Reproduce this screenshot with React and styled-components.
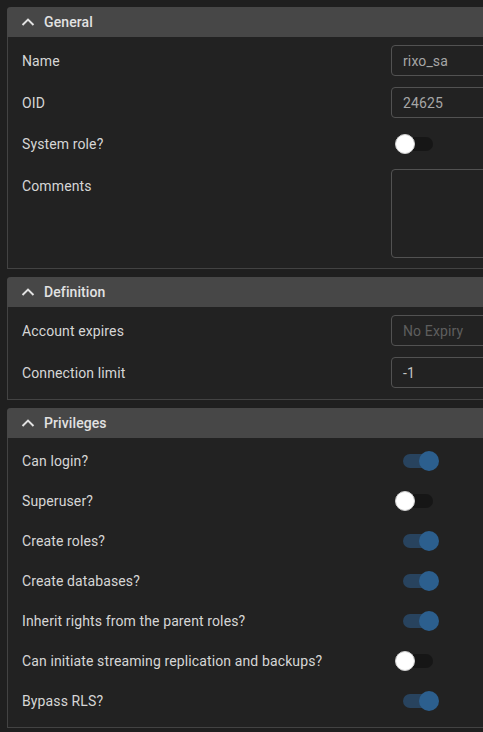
import React from "react";
import styled, { createGlobalStyle } from "styled-components";

const GlobalStyle = createGlobalStyle`
  html, body {
    margin: 0;
    padding: 0;
    overflow: hidden;
    background: #1f1f1f;
  }
  body {
    font-family: Roboto, "Liberation Sans", sans-serif;
  }
`;

const Page = styled.div`
  display: flex;
  flex-direction: column;
  gap: 8px;
  padding: 7px;
  width: 600px;
`;

const Section = styled.section`
  border: 1px solid #434343;
  border-top: none;
  border-radius: 4px 4px 0 0;
  background: #222222;
`;

const Header = styled.div`
  display: flex;
  align-items: center;
  gap: 8px;
  height: 30px;
  padding-left: 13px;
  background: #474747;
  border-radius: 4px 4px 0 0;
  margin: 0 -1px;
  color: #e2e2e2;
  font-size: 14px;
  font-weight: 500;
  letter-spacing: 0.1px;
`;

const Body = styled.div`
  display: flex;
  flex-direction: column;
  gap: 11px;
  padding: 8px 14px ${(p) => p.$bottom || 10}px;
`;

const Row = styled.div`
  display: grid;
  grid-template-columns: 369px 1fr;
  align-items: ${(p) => (p.$top ? "start" : "center")};
  min-height: ${(p) => (p.$tall ? "29px" : "0")};
`;

const Label = styled.span`
  color: #d6d6d6;
  font-size: 14px;
  line-height: 16px;
  letter-spacing: 0.12px;
  padding-top: ${(p) => (p.$top ? "9px" : "0")};
`;

const Input = styled.div`
  box-sizing: border-box;
  height: 31px;
  display: flex;
  align-items: center;
  padding-left: 11px;
  border: 1px solid #525252;
  border-radius: 4px;
  font-size: 14px;
  letter-spacing: 0.12px;
  color: ${(p) => p.$color || "#a6a6a6"};
`;

const TextArea = styled.div`
  box-sizing: border-box;
  height: 89px;
  border: 1px solid #525252;
  border-radius: 4px;
`;

const SwitchBox = styled.div`
  position: relative;
  width: 46px;
  height: 20px;
  margin-left: 4px;
`;

const Track = styled.div`
  position: absolute;
  top: 3px;
  left: ${(p) => (p.$on ? "8px" : "4px")};
  width: 34px;
  height: 14px;
  border-radius: 7px;
  background: ${(p) => (p.$on ? "#28435e" : "#161616")};
`;

const Knob = styled.div`
  position: absolute;
  top: 0;
  left: ${(p) => (p.$on ? "24px" : "0")};
  box-sizing: border-box;
  width: 20px;
  height: 20px;
  border-radius: 50%;
  background: ${(p) => (p.$on ? "#2c5f8e" : "#ffffff")};
  border: ${(p) => (p.$on ? "none" : "1px solid #cfcfcf")};
`;

function Chevron() {
  return (
    <svg width="16" height="16" viewBox="0 0 16 16">
      <polyline
        points="2.5,11 8,5.6 13.5,11"
        fill="none"
        stroke="#e2e2e2"
        strokeWidth="2"
      />
    </svg>
  );
}

function Switch({ on }) {
  return (
    <SwitchBox>
      <Track $on={on} />
      <Knob $on={on} />
    </SwitchBox>
  );
}

function Panel({ title, bottom, children }) {
  return (
    <Section>
      <Header>
        <Chevron />
        {title}
      </Header>
      <Body $bottom={bottom}>{children}</Body>
    </Section>
  );
}

const privileges = [
  ["Can login?", true],
  ["Superuser?", false],
  ["Create roles?", true],
  ["Create databases?", true],
  ["Inherit rights from the parent roles?", true],
  ["Can initiate streaming replication and backups?", false],
  ["Bypass RLS?", true],
];

export default function App() {
  return (
    <>
      <GlobalStyle />
      <Page>
        <Panel title="General">
          <Row>
            <Label>Name</Label>
            <Input>rixo_sa</Input>
          </Row>
          <Row>
            <Label>OID</Label>
            <Input>24625</Input>
          </Row>
          <Row $tall>
            <Label>System role?</Label>
            <Switch on={false} />
          </Row>
          <Row $top>
            <Label $top>Comments</Label>
            <TextArea />
          </Row>
        </Panel>
        <Panel title="Definition" bottom={11}>
          <Row>
            <Label>Account expires</Label>
            <Input $color="#5e5e5e">No Expiry</Input>
          </Row>
          <Row>
            <Label>Connection limit</Label>
            <Input $color="#c4c4c4">-1</Input>
          </Row>
        </Panel>
        <Panel title="Privileges" bottom={12}>
          {privileges.map(([label, on]) => (
            <Row $tall key={label}>
              <Label>{label}</Label>
              <Switch on={on} />
            </Row>
          ))}
        </Panel>
      </Page>
    </>
  );
}
